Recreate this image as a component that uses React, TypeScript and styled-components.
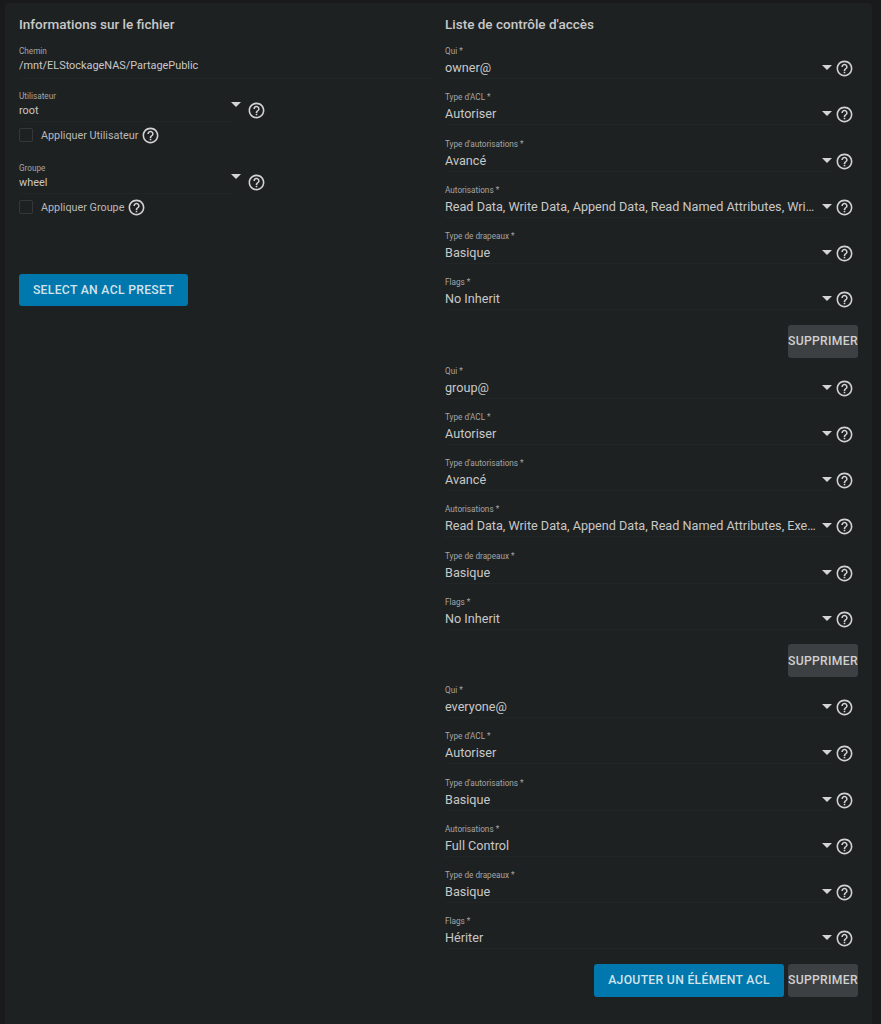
import * as React from "react";
import styled, { createGlobalStyle } from "styled-components";
import { MdHelpOutline } from "react-icons/md";

const GlobalStyle = createGlobalStyle`
  html, body {
    margin: 0;
    height: 100%;
    overflow: hidden;
    background: #181a1b;
    font-family: Roboto, "Liberation Sans", sans-serif;
  }
`;

const Page = styled.div`
  padding: 3px 9px 0 5px;
  height: 1024px;
  box-sizing: border-box;
`;

const Card = styled.main`
  display: grid;
  grid-template-columns: 413px 413px;
  column-gap: 13px;
  padding: 14px 14px 0;
  height: 1040px;
  box-sizing: border-box;
  background: #1e2122;
  border-radius: 4px;
`;

const Column = styled.section`
  display: flex;
  flex-direction: column;
  min-width: 0;
`;

const Title = styled.h2`
  margin: 0 0 14px;
  height: 15px;
  font-size: 13.5px;
  line-height: 15px;
  font-weight: 500;
  color: #c8c8c8;
`;

const Label = styled.div`
  height: 10px;
  font-size: 8.2px;
  line-height: 10px;
  color: #a5a5a5;
`;

const Value = styled.div<{ $large?: boolean }>`
  flex: 1;
  min-width: 0;
  overflow: hidden;
  white-space: nowrap;
  text-overflow: ellipsis;
  margin-top: ${(p) => (p.$large ? "1px" : "2px")};
  font-size: ${(p) => (p.$large ? "12.65px" : "10.9px")};
  line-height: ${(p) => (p.$large ? "18px" : "15px")};
  color: #c8c8c8;
`;

const PathField = styled.div`
  height: 33px;
  box-sizing: border-box;
  margin-bottom: 12px;
  border-bottom: 1px solid #222526;
`;

const SelectField = styled.div`
  display: flex;
  align-items: flex-start;
`;

const SelectBody = styled.div`
  width: 212px;
  height: 31px;
  box-sizing: border-box;
  border-bottom: 1px solid #222526;
`;

const Arrow = styled.span`
  flex: none;
  width: 0;
  height: 0;
  border-left: 5px solid transparent;
  border-right: 5px solid transparent;
  border-top: 5px solid #d4d4d4;
`;

const Help = styled(MdHelpOutline)`
  flex: none;
  width: 19px;
  height: 19px;
  color: #d2d2d2;
`;

const LeftArrow = styled(Arrow)`
  margin: 11px 0 0;
`;

const LeftHelp = styled(Help)`
  margin: 10px 0 0 5.5px;
`;

const CheckRow = styled.label`
  display: flex;
  align-items: center;
  height: 20px;
  margin-top: 3px;
  font-size: 10.8px;
  color: #b9b9b9;
`;

const Check = styled.span`
  width: 14px;
  height: 14px;
  box-sizing: border-box;
  margin-right: 8px;
  border: 1px solid #34383a;
  border-radius: 2px;
`;

const CheckHelp = styled(Help)`
  margin-left: 3px;
`;

const LeftGroup = styled.div`
  margin-bottom: 18px;
`;

const Button = styled.button<{ $primary?: boolean }>`
  height: 33px;
  border: 0;
  border-radius: 3px;
  padding: 0;
  font-family: inherit;
  font-size: 12.2px;
  font-weight: 500;
  letter-spacing: 0.3px;
  white-space: nowrap;
  color: ${(p) => (p.$primary ? "#d3e3ec" : "#d0d0d0")};
  background: ${(p) => (p.$primary ? "#0077ad" : "#3c4042")};
  width: ${(p) => (p.$primary ? "190px" : "70px")};
`;

const PresetButton = styled(Button)`
  width: 169px;
  height: 32px;
  margin-top: 39px;
`;

const Row = styled.div`
  height: 46.25px;
`;

const RowLine = styled.div`
  display: flex;
  align-items: flex-start;
  height: 21px;
  margin-top: 2px;
`;

const RowValueWrap = styled.div`
  display: flex;
  flex: 1;
  min-width: 0;
  align-items: flex-start;
  height: 21px;
  box-sizing: border-box;
  border-bottom: 1px solid #222526;
`;

const RowArrow = styled(Arrow)`
  margin: 7px 0 0 5px;
`;

const RowHelp = styled(Help)`
  margin: 1px 4.5px 0 2.5px;
`;

const Actions = styled.div`
  display: flex;
  justify-content: flex-end;
  gap: 4px;
  height: 41px;
  margin-top: 1px;
`;

interface AclField {
  label: string;
  value: string;
}

interface AclEntry {
  fields: AclField[];
  addButton?: boolean;
}

const entries: AclEntry[] = [
  {
    fields: [
      { label: "Qui *", value: "owner@" },
      { label: "Type d'ACL *", value: "Autoriser" },
      { label: "Type d'autorisations *", value: "Avancé" },
      { label: "Autorisations *", value: "Read Data, Write Data, Append Data, Read Named Attributes, Write Named Attributes" },
      { label: "Type de drapeaux *", value: "Basique" },
      { label: "Flags *", value: "No Inherit" },
    ],
  },
  {
    fields: [
      { label: "Qui *", value: "group@" },
      { label: "Type d'ACL *", value: "Autoriser" },
      { label: "Type d'autorisations *", value: "Avancé" },
      { label: "Autorisations *", value: "Read Data, Write Data, Append Data, Read Named Attributes, Execute, Delete" },
      { label: "Type de drapeaux *", value: "Basique" },
      { label: "Flags *", value: "No Inherit" },
    ],
  },
  {
    fields: [
      { label: "Qui *", value: "everyone@" },
      { label: "Type d'ACL *", value: "Autoriser" },
      { label: "Type d'autorisations *", value: "Basique" },
      { label: "Autorisations *", value: "Full Control" },
      { label: "Type de drapeaux *", value: "Basique" },
      { label: "Flags *", value: "Hériter" },
    ],
    addButton: true,
  },
];

export default function App() {
  return (
    <Page>
      <GlobalStyle />
      <Card>
        <Column>
          <Title>Informations sur le fichier</Title>
          <PathField>
            <Label>Chemin</Label>
            <Value>/mnt/ELStockageNAS/PartagePublic</Value>
          </PathField>
          <LeftGroup>
            <SelectField>
              <SelectBody>
                <Label>Utilisateur</Label>
                <Value>root</Value>
              </SelectBody>
              <LeftArrow />
              <LeftHelp />
            </SelectField>
            <CheckRow>
              <Check />
              Appliquer Utilisateur
              <CheckHelp />
            </CheckRow>
          </LeftGroup>
          <LeftGroup>
            <SelectField>
              <SelectBody>
                <Label>Groupe</Label>
                <Value>wheel</Value>
              </SelectBody>
              <LeftArrow />
              <LeftHelp />
            </SelectField>
            <CheckRow>
              <Check />
              Appliquer Groupe
              <CheckHelp />
            </CheckRow>
          </LeftGroup>
          <PresetButton $primary>SELECT AN ACL PRESET</PresetButton>
        </Column>
        <Column>
          <Title>Liste de contrôle d'accès</Title>
          {entries.map((entry, i) => (
            <div key={i}>
              {entry.fields.map((field) => (
                <Row key={field.label}>
                  <Label>{field.label}</Label>
                  <RowLine>
                    <RowValueWrap>
                      <Value $large>{field.value}</Value>
                      <RowArrow />
                    </RowValueWrap>
                    <RowHelp />
                  </RowLine>
                </Row>
              ))}
              <Actions>
                {entry.addButton && <Button $primary>AJOUTER UN ÉLÉMENT ACL</Button>}
                <Button>SUPPRIMER</Button>
              </Actions>
            </div>
          ))}
        </Column>
      </Card>
    </Page>
  );
}
